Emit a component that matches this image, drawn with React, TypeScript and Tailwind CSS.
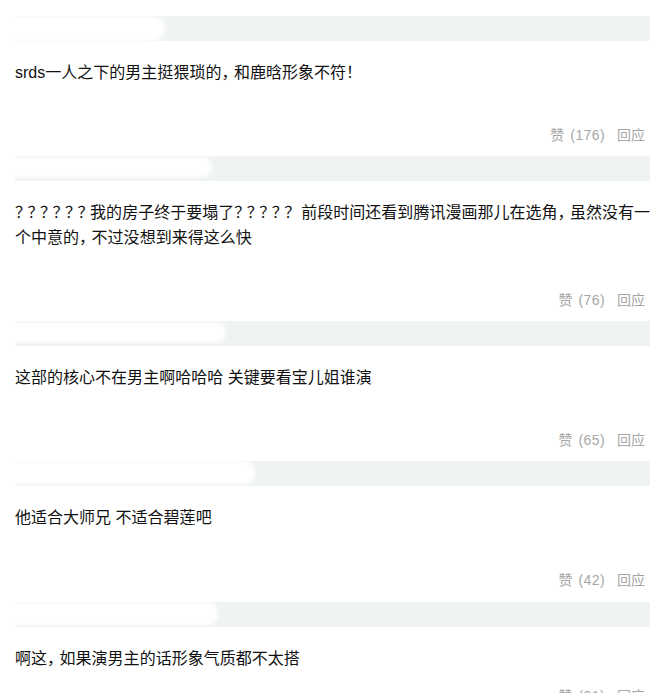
type Comment = {
  id: number;
  text: string;
  likes: number;
  mask: string;
  gap: string;
  bottom: string;
};

const comments: Comment[] = [
  {
    id: 1,
    text: 'srds一人之下的男主挺猥琐的，和鹿晗形象不符！',
    likes: 176,
    mask: 'w-[165px] top-0 bottom-0',
    gap: 'mt-[40px]',
    bottom: 'mb-[11px]',
  },
  {
    id: 2,
    text: '？？？？？？我的房子终于要塌了？？？？？ 前段时间还看到腾讯漫画那儿在选角，虽然没有一个中意的，不过没想到来得这么快',
    likes: 76,
    mask: 'w-[212px] top-[1px] bottom-[4px]',
    gap: 'mt-[40px]',
    bottom: 'mb-[11px]',
  },
  {
    id: 3,
    text: '这部的核心不在男主啊哈哈哈 关键要看宝儿姐谁演',
    likes: 65,
    mask: 'w-[226px] top-[1px] bottom-[4px]',
    gap: 'mt-[40px]',
    bottom: 'mb-[11px]',
  },
  {
    id: 4,
    text: '他适合大师兄 不适合碧莲吧',
    likes: 42,
    mask: 'w-[255px] top-0 bottom-[2px]',
    gap: 'mt-[40px]',
    bottom: 'mb-[12px]',
  },
  {
    id: 5,
    text: '啊这，如果演男主的话形象气质都不太搭',
    likes: 31,
    mask: 'w-[218px] top-0 bottom-[2px]',
    gap: 'mt-[15px]',
    bottom: 'mb-[11px]',
  },
];

// full-width punctuation sits narrower in the original font
const PUNCT = '，！？';

const renderText = (text: string) =>
  Array.from(text).map((ch, i) =>
    PUNCT.includes(ch) ? (
      <span key={i} className="tracking-[-3.5px]">
        {ch}
      </span>
    ) : (
      ch
    ),
  );

const App = () => {
  return (
    <div
      className="h-[693px] w-[659px] overflow-hidden bg-white pl-[15px] pr-[9px] pt-[16px]"
      style={{ fontFamily: '"Liberation Sans", Arial, "Noto Sans CJK SC", sans-serif' }}
    >
      {comments.map((c) => (
        <div key={c.id} className={c.bottom}>
          {/* author bar, name blanked out */}
          <div className="relative h-[25px] bg-[#eff4f2]">
            <div className={`absolute -left-[15px] rounded-r-full bg-white blur-[2px] ${c.mask}`} />
          </div>
          <p className="mr-[-9px] mt-[19px] text-[16px] leading-[25px] text-[#111111]">
            {renderText(c.text)}
          </p>
          <div
            className={`flex h-[20px] items-center justify-end gap-[12px] pr-[5px] text-[14px] leading-[20px] text-[#a6a6a6] ${c.gap}`}
          >
            <span className="flex gap-[6px]">
              <span>赞</span>
              <span className="tracking-[0.4px]">({c.likes})</span>
            </span>
            <span>回应</span>
          </div>
        </div>
      ))}
    </div>
  );
};

export default App;
